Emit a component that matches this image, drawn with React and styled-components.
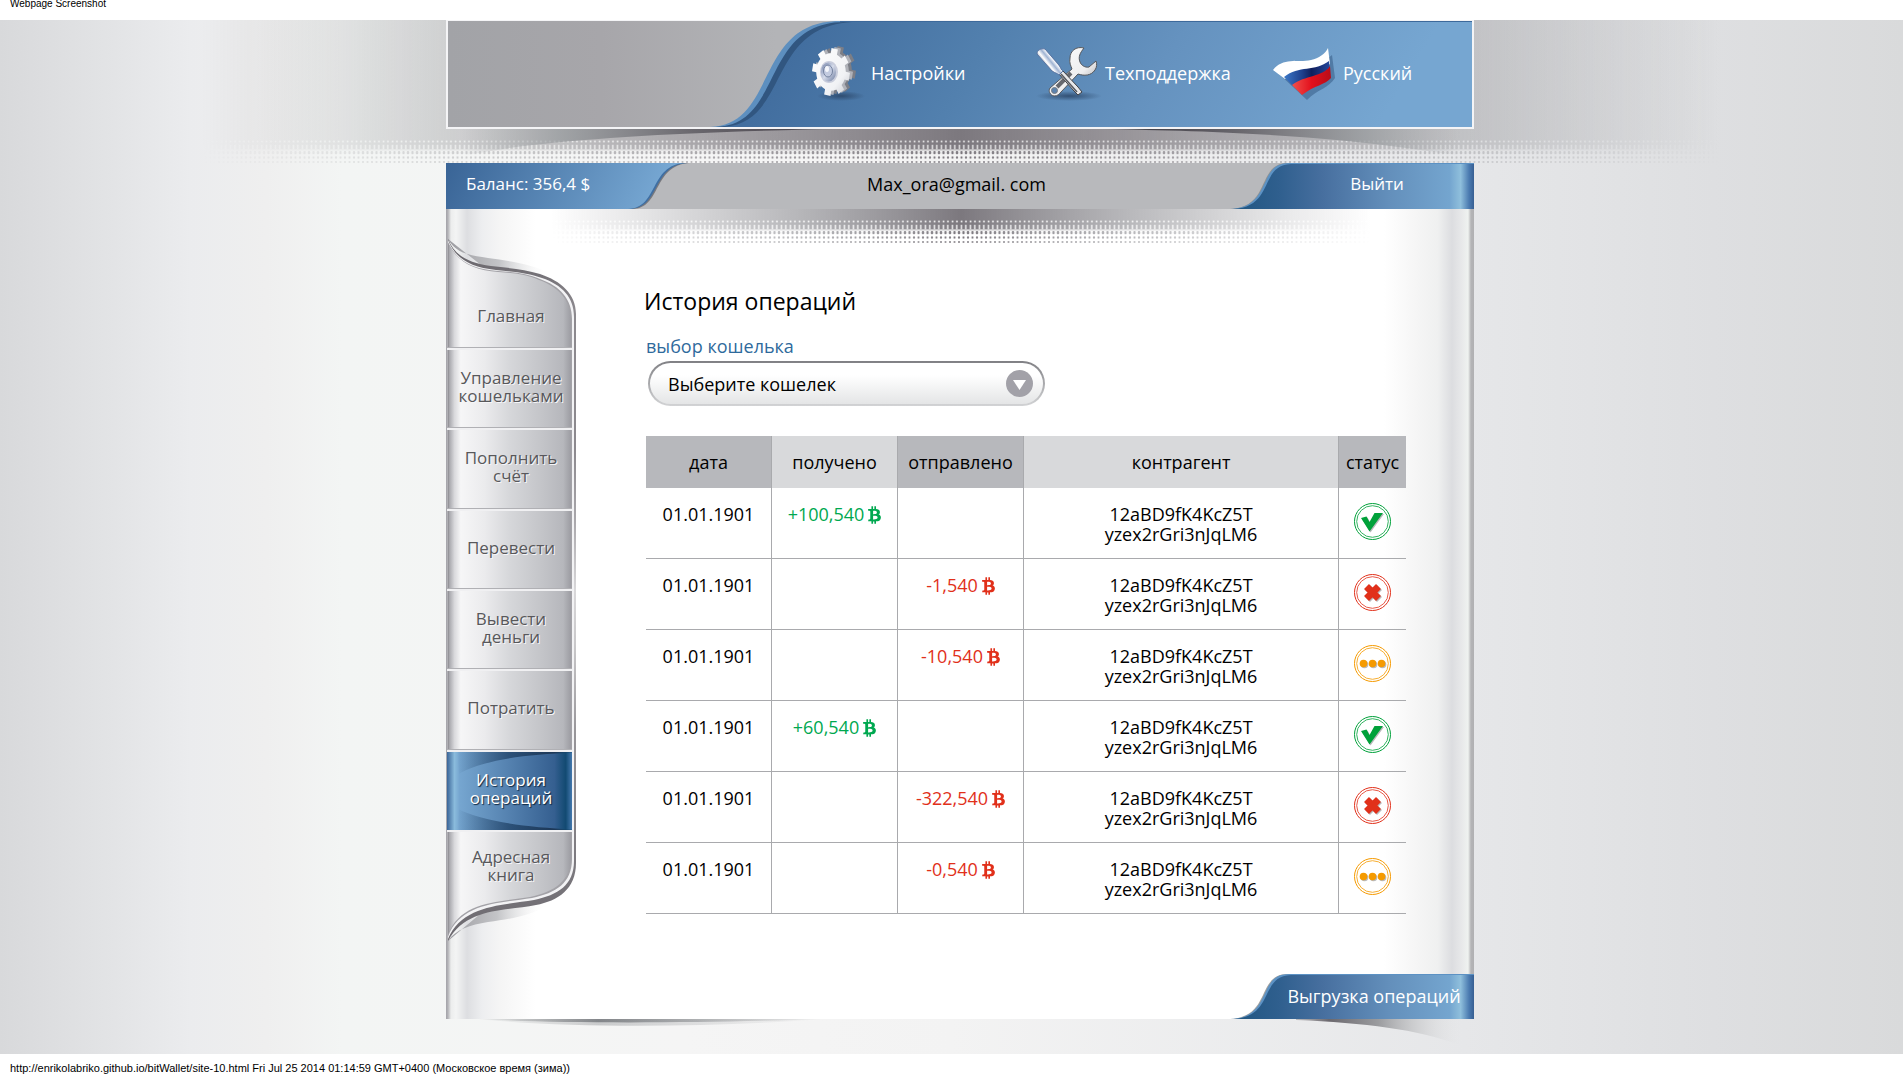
import React from "react";
import styled, { createGlobalStyle, css } from "styled-components";
import { FaBtc } from "react-icons/fa";

const GlobalStyle = createGlobalStyle`
  *, *::before, *::after { box-sizing: border-box; }
  body { margin: 0; background: #fff; color: #000; font-family: "Open Sans", "Noto Sans", sans-serif; font-size: 18px; line-height: 20px; }
  a { color: inherit; text-decoration: none; }
`;

const Caption = styled.p`
  margin: 0;
  height: 20px;
  padding: ${(p) => (p.$bottom ? "10px" : "0")} 10px 0;
  font-family: "Liberation Sans", Arial, sans-serif;
  font-size: ${(p) => (p.$bottom ? "11px" : "10px")};
  line-height: 8px;
  background: #fff;
`;

const Stage = styled.div`
  position: relative;
  overflow: hidden;
  padding: 0 0 35px 17px;
  background: linear-gradient(90deg, #d8d9db 0%, #e3e4e6 6%, #ebecee 10%, #efefef 14%, #f3f5f4 18%, #f5f5f5 36%, #f3f3f3 50%, #e6e7e9 77%, #dedfe1 90%, #d9dadb 100%);
`;

const StageShade = styled.svg`
  position: absolute;
  top: 0;
  left: calc(50% + 9px);
  width: 1520px;
  height: 143px;
  margin-left: -760px;
`;

const Column = styled.div`
  position: relative;
  width: 1028px;
  margin: 0 auto;
`;

const Header = styled.header`
  position: relative;
  height: 109px;
  margin-bottom: 34px;
  border: 2px solid #f4f4f6;
  border-top-width: 1px;
  background: linear-gradient(90deg, #a2a3a7, #a7a6aa 15%, #b3b4b7 32%);
`;

const HeaderArt = styled.svg`
  position: absolute;
  inset: 0;
  width: 100%;
  height: 100%;
`;

const HeaderShadow = styled.svg`
  position: absolute;
  left: 0;
  top: 109px;
  width: 1028px;
  height: 26px;
`;

const TopNav = styled.nav`
  position: relative;
  display: grid;
  grid-template-columns: 225px 238px 1fr;
  align-items: center;
  height: 100%;
  padding: 0 0 3px 362px;
`;

const TopLink = styled.a`
  display: flex;
  align-items: center;
  color: #fff;
  line-height: 24px;
`;

const TopIcon = styled.svg`
  flex: none;
  width: ${(p) => p.$w}px;
  height: 56px;
`;

const Bar = styled.div`
  display: grid;
  grid-template-columns: 244px 1fr 244px;
  align-items: stretch;
  height: 46px;
  background: #b8b9bc;
`;

const Balance = styled.div`
  position: relative;
  padding-left: 20px;
  color: #fff;
  font-size: 17px;
  font-weight: 500;
  line-height: 42px;
`;

const Account = styled.div`
  padding-right: 7px;
  text-align: center;
  line-height: 42px;
`;

const TabArt = styled.svg`
  position: absolute;
  left: 0;
  top: 0;
  width: 100%;
  height: 100%;
`;

const TabLink = styled.a`
  position: relative;
  display: block;
  width: 244px;
  height: 45px;
  padding: 0 10px 0 54px;
  color: #fff;
  font-weight: 500;
  line-height: 45px;
  text-align: center;
  white-space: nowrap;
  ${(p) => p.$export && css`align-self: flex-end; margin: 33px 0 0;`}
  ${(p) => p.$bar && css`height: 46px; padding-right: 4px; font-size: 17px; line-height: 42px;`}
`;

const Label = styled.span`
  position: relative;
`;

const Sheet = styled.div`
  position: relative;
  display: flex;
  flex-direction: column;
  background: linear-gradient(90deg, #a3a2a8 0, #b4b4b8 2px, #eceded 5px, #f3f4f4 10px, #dddee1 21px, #edeef0 36px, #f5f5f5 54px, #fff 90px, #fff calc(100% - 90px), #f5f5f5 calc(100% - 56px), #eff0f0 calc(100% - 36px), #dcdde0 calc(100% - 22px), #e8e9ea calc(100% - 12px), #eff2f0 calc(100% - 6px), #b4b4b6 calc(100% - 3px), #b0b0b2 100%);
`;

const SheetShade = styled.svg`
  position: absolute;
  left: 0;
  top: 0;
  width: 100%;
  height: 36px;
`;

const SheetShadow = styled.svg`
  position: absolute;
  left: 0;
  top: 100%;
  width: 1028px;
  height: 32px;
`;

const Columns = styled.div`
  position: relative;
  display: flex;
  align-items: flex-start;
`;

const SideNav = styled.nav`
  position: relative;
  flex: none;
  width: 131px;
  margin-top: 30px;
`;

const SideArt = styled.svg`
  position: absolute;
  left: 0;
  top: 0;
  width: 131px;
  height: 702px;
`;

const SideList = styled.ul`
  position: relative;
  display: grid;
  grid-template-rows: 109px repeat(6, 1fr) 111px;
  width: 125px;
  height: 702px;
  margin: 0 0 0 1px;
  padding: 0;
  list-style: none;
`;

const SideItem = styled.li`
  display: flex;
  &:first-child { padding-top: 48px; }
  &:last-child { padding-bottom: 38px; }
  & + & { border-top: 2px solid #f0f0f2; box-shadow: 0 -1px 0 #b0b0b4; }
`;

const SideLink = styled.a`
  position: relative;
  flex: 1;
  display: flex;
  align-items: center;
  justify-content: center;
  padding: 0 8px 4px 11px;
  font-size: 17px;
  line-height: 18px;
  text-align: center;
  color: #58585b;
  text-shadow: 1px 1px 0 #f6f6f8;
  ${(p) => p.$active && css`
    color: #fff;
    text-shadow: 1px 1px 1px #10273f;
  `}
`;

const Main = styled.main`
  flex: 1;
  padding: 76px 68px 0 69px;
`;

const Title = styled.h1`
  margin: 0 0 18px -2px;
  font-size: 23px;
  font-weight: 400;
  line-height: 32px;
`;

const FieldLabel = styled.label`
  display: block;
  color: #2f6a9c;
  line-height: 23px;
`;

const SelectWrap = styled.div`
  position: relative;
  width: 397px;
  margin: 3px 0 30px 2px;
`;

const Select = styled.select`
  display: block;
  appearance: none;
  width: 100%;
  height: 45px;
  padding: 0 60px 0 18px;
  border: 2px solid transparent;
  border-radius: 23px;
  background: linear-gradient(#fff 30%, #e4e5e6) padding-box, linear-gradient(#808084, #d2d3d5) border-box;
  color: #000;
  font: inherit;
  line-height: 24px;
`;

const SelectArrow = styled.svg`
  position: absolute;
  right: 12px;
  top: 9px;
  width: 27px;
  height: 27px;
  pointer-events: none;
`;

const Table = styled.table`
  width: 100%;
  table-layout: fixed;
  border-collapse: separate;
  border-spacing: 0;
`;

const Th = styled.th`
  width: ${(p) => p.$w};
  height: 52px;
  padding: 0;
  font-weight: 400;
  text-align: center;
  background: ${(p) => (p.$dark ? "#b7b8bc" : "#d8d9db")};
  & + & { border-left: 1px solid #a9aaad; }
`;

const Td = styled.td`
  height: 71px;
  padding: 16px 0 0;
  border-bottom: 1px solid #a9aaad;
  vertical-align: top;
  text-align: center;
  color: ${(p) => p.$color || "#000"};
  & + & { border-left: 1px solid #a9aaad; }
`;

const StatusTd = styled(Td)`
  padding: 15px 0 0;
`;

const StatusIcon = styled.svg`
  display: block;
  width: 37px;
  height: 37px;
  margin: 0 auto;
`;

const Coin = styled(FaBtc)`
  width: 13px;
  height: 18px;
  margin-left: 4px;
  vertical-align: -3px;
`;

/* Halftone fade: a solid band that breaks up into rows of shrinking dots. */
function HalftoneDefs({ id, solid }) {
  return (
    <>
      <pattern id={`${id}-dots`} width="4.5" height="36" y={solid} patternUnits="userSpaceOnUse">
        <rect width="4.5" height="20.5" fill="#fff" />
        <rect x="1.7" y="11.6" width="1.6" height="1.8" fill="#111" />
        <rect x="1.6" y="15.8" width="1.5" height="4.7" fill="#222" />
        <rect y="20.5" width="4.5" height="1" fill="#777" />
        <rect x="3.3" y="22" width="2.4" height="3.2" rx="1" fill="#fff" />
        <rect x="-1.2" y="22" width="2.4" height="3.2" rx="1" fill="#fff" />
        <rect x="3.5" y="27.2" width="2" height="2.6" rx="1" fill="#fff" />
        <rect x="-1" y="27.2" width="2" height="2.6" rx="1" fill="#fff" />
        <rect x="3.7" y="32" width="1.6" height="2" fill="#ddd" />
        <rect x="-0.8" y="32" width="1.6" height="2" fill="#ddd" />
      </pattern>
      <mask id={`${id}-mask`} maskUnits="userSpaceOnUse" x="0" y="0" width="1600" height={solid + 36}>
        <rect width="1600" height={solid} fill="#fff" />
        <rect y={solid} width="1600" height="36" fill={`url(#${id}-dots)`} />
      </mask>
    </>
  );
}

function TopShade() {
  return (
    <StageShade viewBox="0 0 1520 143" aria-hidden="true">
      <defs>
        <linearGradient id="top-shade">
          <stop offset="0" stopColor="#7c787e" stopOpacity="0" />
          <stop offset="0.08" stopColor="#858589" stopOpacity="0.14" />
          <stop offset="0.16" stopColor="#858589" stopOpacity="0.32" />
          <stop offset="0.35" stopColor="#7c787e" stopOpacity="0.68" />
          <stop offset="0.5" stopColor="#7c787e" stopOpacity="1" />
          <stop offset="0.65" stopColor="#7c787e" stopOpacity="0.66" />
          <stop offset="0.84" stopColor="#858589" stopOpacity="0.36" />
          <stop offset="1" stopColor="#858589" stopOpacity="0" />
        </linearGradient>
        <HalftoneDefs id="top" solid={109} />
      </defs>
      <rect width="1520" height="143" fill="url(#top-shade)" mask="url(#top-mask)" />
    </StageShade>
  );
}

function InnerShade() {
  return (
    <SheetShade viewBox="0 0 1028 36" preserveAspectRatio="none" aria-hidden="true">
      <defs>
        <linearGradient id="inner-shade" gradientUnits="userSpaceOnUse" x1="105" x2="925" y1="0" y2="0">
          <stop offset="0" stopColor="#7c787e" stopOpacity="0" />
          <stop offset="0.1" stopColor="#8b8b90" stopOpacity="0.2" />
          <stop offset="0.3" stopColor="#8b8b90" stopOpacity="0.62" />
          <stop offset="0.5" stopColor="#7c787e" stopOpacity="1" />
          <stop offset="0.7" stopColor="#8b8b90" stopOpacity="0.62" />
          <stop offset="0.9" stopColor="#8b8b90" stopOpacity="0.18" />
          <stop offset="1" stopColor="#7c787e" stopOpacity="0" />
        </linearGradient>
        <HalftoneDefs id="inner" solid={0} />
      </defs>
      <rect width="1028" height="36" fill="url(#inner-shade)" mask="url(#inner-mask)" />
    </SheetShade>
  );
}

function HeaderBackground() {
  return (
    <HeaderArt viewBox="0 0 1024 106" preserveAspectRatio="none" aria-hidden="true">
      <defs>
        <linearGradient id="head-blue" gradientUnits="userSpaceOnUse" x1="400" y1="-60" x2="860" y2="220">
          <stop offset="0" stopColor="#426e9f" />
          <stop offset="0.3" stopColor="#5280ae" />
          <stop offset="0.6" stopColor="#6592bf" />
          <stop offset="1" stopColor="#76a6d1" />
        </linearGradient>
      </defs>
      <path d="M262 106 C330 104 306 0 392 0 H1024 V106 Z" fill="#5d8fbf" />
      <path d="M268 106 C336 104 312 2 396 1 H1024 V106 Z" fill="#315680" />
      <path d="M276 106 C342 101 318 6 404 1 H1024 V106 Z" fill="url(#head-blue)" />
      <rect x="392" width="632" height="1" fill="#3d699b" />
    </HeaderArt>
  );
}

function HeaderCastShadow() {
  return (
    <HeaderShadow viewBox="0 0 1028 26" aria-hidden="true">
      <defs>
        <linearGradient id="cast-left" gradientUnits="userSpaceOnUse" x1="15" x2="400" y1="0" y2="0">
          <stop offset="0" stopColor="#a5a7aa" stopOpacity="0" />
          <stop offset="0.25" stopColor="#969a9d" stopOpacity="0.7" />
          <stop offset="0.6" stopColor="#6a686e" />
          <stop offset="0.85" stopColor="#504b53" />
          <stop offset="1" stopColor="#504b53" stopOpacity="0" />
        </linearGradient>
        <linearGradient id="cast-right" gradientUnits="userSpaceOnUse" x1="1013" x2="650" y1="0" y2="0">
          <stop offset="0" stopColor="#a5a7aa" stopOpacity="0" />
          <stop offset="0.25" stopColor="#969a9d" stopOpacity="0.7" />
          <stop offset="0.6" stopColor="#6a686e" />
          <stop offset="0.85" stopColor="#45424a" />
          <stop offset="1" stopColor="#45424a" stopOpacity="0" />
        </linearGradient>
      </defs>
      <path d="M10 0 H400 C260 2 150 8 70 18 L20 26 Z" fill="url(#cast-left)" />
      <path d="M1018 0 H650 C790 2 880 8 960 19 L1010 26 Z" fill="url(#cast-right)" />
    </HeaderShadow>
  );
}

function gearPath(cx, cy, rx, ry, turn) {
  const steps = [[-0.5, 0.78], [-0.27, 0.78], [-0.22, 1], [0.22, 1], [0.27, 0.78]];
  const points = [];
  for (let i = 0; i < 8; i += 1) {
    steps.forEach(([offset, radius]) => {
      const angle = ((i + offset) * Math.PI) / 4 + turn;
      points.push(`${(cx + Math.cos(angle) * rx * radius).toFixed(1)} ${(cy + Math.sin(angle) * ry * radius).toFixed(1)}`);
    });
  }
  return `M${points.join("L")}Z`;
}

function GearIcon() {
  return (
    <TopIcon $w={61} viewBox="0 0 61 56" aria-hidden="true">
      <defs>
        <linearGradient id="gear-face" x1="0" y1="0" x2="1" y2="1">
          <stop offset="0" stopColor="#ffffff" />
          <stop offset="0.7" stopColor="#f1f2f5" />
          <stop offset="1" stopColor="#c5c7ce" />
        </linearGradient>
        <linearGradient id="gear-hub" x1="0" y1="0" x2="1" y2="1">
          <stop offset="0" stopColor="#6f7fa8" />
          <stop offset="0.5" stopColor="#d5dbea" />
          <stop offset="1" stopColor="#6a799d" />
        </linearGradient>
        <radialGradient id="icon-ground">
          <stop offset="0" stopColor="#2b4668" stopOpacity="0.85" />
          <stop offset="1" stopColor="#2b4668" stopOpacity="0" />
        </radialGradient>
      </defs>
      <ellipse cx="31" cy="51" rx="24" ry="5" fill="url(#icon-ground)" />
      <path d={gearPath(27, 25, 19, 24, 0.2)} fill="#7c7e86" />
      <path d={gearPath(24, 26, 19, 24, 0.2)} fill="#b0b2b9" />
      <path d={gearPath(21, 27, 19, 24, 0.2)} fill="url(#gear-face)" />
      <ellipse cx="19" cy="27" rx="9" ry="11" fill="#c9cddc" />
      <ellipse cx="18.500" cy="27" rx="7.500" ry="9.500" fill="url(#gear-hub)" />
      <ellipse cx="18" cy="26" rx="4.500" ry="6" fill="#c3cbe0" stroke="#74829f" />
      <ellipse cx="17" cy="24" rx="2" ry="3" fill="#f4f6fb" />
    </TopIcon>
  );
}

function ToolsIcon() {
  return (
    <TopIcon $w={70} viewBox="0 0 70 56" aria-hidden="true">
      <defs>
        <linearGradient id="tool-handle" gradientUnits="userSpaceOnUse" x1="6" y1="18" x2="17" y2="9">
          <stop offset="0" stopColor="#6f7d96" />
          <stop offset="0.35" stopColor="#ffffff" />
          <stop offset="0.6" stopColor="#9fb3d2" />
          <stop offset="0.8" stopColor="#f4f6fb" />
          <stop offset="1" stopColor="#4c6894" />
        </linearGradient>
        <linearGradient id="tool-wrench" x1="0" y1="0" x2="1" y2="1">
          <stop offset="0" stopColor="#ffffff" />
          <stop offset="0.6" stopColor="#eeeeef" />
          <stop offset="1" stopColor="#8d8e92" />
        </linearGradient>
      </defs>
      <ellipse cx="34" cy="51" rx="33" ry="5" fill="url(#icon-ground)" />
      <path d="M49 3 C41 1 35 6 35 13 C34 18 36 21 37 24 L15 43 C13 46 15 50 19 51 C23 51 24 49 26 47 L43 29 C49 31 56 31 60 25 C62 22 62 19 61 16 L54 22 C50 23 46 20 45 17 C43 12 45 8 49 3 Z" fill="url(#tool-wrench)" stroke="#55575c" strokeWidth="1" />
      <path d="M36 28 L22 42" stroke="#66686e" strokeWidth="4" />
      <circle cx="19.500" cy="45.500" r="3" fill="#5b82ad" stroke="#777a80" />
      <path d="M24 29 L28 26 L43 42 L47 47 L43 50 L39 46 Z" fill="#e8e8ea" stroke="#3f4146" strokeWidth="1" />
      <path d="M26 29 L42 47" stroke="#55575d" strokeWidth="1.500" />
      <path d="M2 9 C2 5 6 3 10 4 L24 20 C26 23 26 25 28 26 L24 30 C22 28 20 28 17 26 Z" fill="url(#tool-handle)" stroke="#5975a3" strokeWidth="1" />
    </TopIcon>
  );
}

function FlagIcon() {
  return (
    <TopIcon $w={70} viewBox="0 0 70 56" aria-hidden="true">
      <defs>
        <linearGradient id="flag-blue">
          <stop offset="0" stopColor="#3c78c8" />
          <stop offset="0.4" stopColor="#1d3f8c" />
          <stop offset="0.6" stopColor="#101f5c" />
          <stop offset="1" stopColor="#23479c" />
        </linearGradient>
        <linearGradient id="flag-red">
          <stop offset="0" stopColor="#f0504c" />
          <stop offset="0.5" stopColor="#e3101c" />
          <stop offset="1" stopColor="#b80c18" />
        </linearGradient>
      </defs>
      <path d="M5 28 C20 20 42 24 59 10 L62 33 C56 43 45 44 34 55 Z" fill="#2b4d78" opacity="0.45" />
      <path d="M0 25 C10 12 24 18 38 15 C46 13 52 9 55 3 L57 19 C48 28 30 24 12 34 Z" fill="#fff" />
      <path d="M11 32 C26 20 42 27 56 16 L57 26 C48 34 33 32 20 41 Z" fill="url(#flag-blue)" />
      <path d="M19 40 C32 30 50 32 57 21 L58 33 C52 40 42 40 29 50 Z" fill="url(#flag-red)" />
    </TopIcon>
  );
}

function BalanceBackground() {
  return (
    <TabArt viewBox="0 0 244 46" preserveAspectRatio="none" aria-hidden="true">
      <defs>
        <linearGradient id="balance-blue" gradientUnits="userSpaceOnUse" x1="0" y1="0" x2="190" y2="90">
          <stop offset="0" stopColor="#396496" />
          <stop offset="1" stopColor="#78a9d4" />
        </linearGradient>
      </defs>
      <path d="M0 0 H244 C206 2 216 46 186 46 H0 Z" fill="#77787d" />
      <path d="M0 0 H242 C205 2 215 45 184 46 H0 Z" fill="#3f6fa3" />
      <path d="M0 0 H239 C203 2 213 45 182 46 H0 Z" fill="url(#balance-blue)" />
    </TabArt>
  );
}

function TabBackground({ id }) {
  return (
    <TabArt viewBox="0 0 244 46" preserveAspectRatio="none" aria-hidden="true">
      <defs>
        <linearGradient id={id} gradientUnits="userSpaceOnUse" x1="0" y1="0" x2="244" y2="0">
          <stop offset="0" stopColor="#1f5580" />
          <stop offset="0.2" stopColor="#2f5f8e" />
          <stop offset="0.38" stopColor="#476f9f" />
          <stop offset="0.65" stopColor="#638fbb" />
          <stop offset="0.9" stopColor="#74a5cf" />
          <stop offset="0.945" stopColor="#8fbfdc" />
          <stop offset="0.98" stopColor="#4a7ab0" />
          <stop offset="1" stopColor="#375f92" />
        </linearGradient>
      </defs>
      <path d="M0 46 C42 44 26 0 58 0 H70 V46 Z" fill="#8a8886" opacity="0.8" />
      <path d="M1 46 C43 44 27 0 59 0 H244 V46 Z" fill="#5c92c4" />
      <path d="M3 46 C45 44 29 2 61 1 H244 V46 Z" fill={`url(#${id})`} />
    </TabArt>
  );
}

function SideBackground() {
  return (
    <SideArt viewBox="0 0 131 702" aria-hidden="true">
      <defs>
        <linearGradient id="side-face" gradientUnits="userSpaceOnUse" x1="1" x2="126" y1="0" y2="0">
          <stop offset="0" stopColor="#77757b" />
          <stop offset="0.02" stopColor="#a9a9ae" />
          <stop offset="0.06" stopColor="#d9d9dc" />
          <stop offset="0.11" stopColor="#f6f6f7" />
          <stop offset="0.3" stopColor="#ebebed" />
          <stop offset="0.5" stopColor="#d6d7da" />
          <stop offset="0.75" stopColor="#c4c5c9" />
          <stop offset="0.93" stopColor="#b6b7bc" />
          <stop offset="1" stopColor="#99999f" />
        </linearGradient>
        <linearGradient id="side-frame" x1="0" y1="0" x2="0" y2="1">
          <stop offset="0" stopColor="#5d5a60" />
          <stop offset="0.1" stopColor="#8c898e" />
          <stop offset="0.3" stopColor="#8c898e" />
          <stop offset="0.4" stopColor="#a9a7ab" />
          <stop offset="0.5" stopColor="#d9d8da" />
          <stop offset="0.58" stopColor="#c9c8ca" />
          <stop offset="0.7" stopColor="#98969a" />
          <stop offset="1" stopColor="#6b686e" />
        </linearGradient>
        <linearGradient id="side-leaf">
          <stop offset="0" stopColor="#9c9ca1" />
          <stop offset="0.5" stopColor="#c3c4c7" />
          <stop offset="1" stopColor="#fff" stopOpacity="0" />
        </linearGradient>
      </defs>
      <path d="M2 0 C10 14 22 16 42 19 C66 22 88 26 104 34 L94 40 L40 30 Z" fill="url(#side-leaf)" />
      <path d="M2 702 C10 690 24 686 42 683 C66 680 84 676 100 668 L90 662 L40 670 Z" fill="url(#side-leaf)" />
      <path d="M2 0 C8 16 22 24 45 27 C62 29 78 30 94 35 C115 42 130 55 130 75 V624 C130 650 112 662 90 666 C60 672 20 668 2 702 Z" fill="url(#side-frame)" />
      <path d="M2 1 C10 20 24 28 50 31 C70 33 82 34 96 39 C116 46 128 58 128 78 V622 C128 646 112 656 88 661 C60 666 16 665 2 700 Z" fill="#f3f3f5" />
      <path d="M2 3 C12 24 28 30 52 32 C70 33 82 35 94 40 C114 47 126 60 126 80 V620 C126 644 110 654 86 659 C56 664 14 663 2 698 Z" fill="#a3a2a7" />
      <path d="M2 4 C12 24 28 31 52 33 C70 34 82 36 93 41 C112 48 125 60 125 82 V618 C125 642 108 653 84 658 C54 663 14 662 2 696 Z" fill="url(#side-face)" />
    </SideArt>
  );
}

function ActiveBackground() {
  return (
    <TabArt viewBox="0 0 125 79" preserveAspectRatio="none" aria-hidden="true">
      <defs>
        <linearGradient id="active-face">
          <stop offset="0" stopColor="#3a6598" />
          <stop offset="0.06" stopColor="#8abbdc" />
          <stop offset="0.1" stopColor="#76a6d0" />
          <stop offset="0.5" stopColor="#5481af" />
          <stop offset="0.86" stopColor="#355f90" />
          <stop offset="0.95" stopColor="#124a72" />
          <stop offset="1" stopColor="#4478ae" />
        </linearGradient>
        <linearGradient id="active-shade">
          <stop offset="0" stopColor="#1f4166" stopOpacity="0" />
          <stop offset="0.45" stopColor="#1f4166" stopOpacity="0.75" />
          <stop offset="0.85" stopColor="#1a3350" stopOpacity="0.9" />
          <stop offset="1" stopColor="#124a72" stopOpacity="0.4" />
        </linearGradient>
      </defs>
      <rect width="125" height="79" fill="url(#active-face)" />
      <path d="M10 0 H125 V1 C80 2 36 8 12 22 Z" fill="url(#active-shade)" />
      <path d="M10 79 H125 V78 C80 76 36 70 12 58 Z" fill="url(#active-shade)" />
    </TabArt>
  );
}

const STATUS = {
  done: { color: "#00a13a", label: "выполнено" },
  failed: { color: "#e1301a", label: "отклонено" },
  pending: { color: "#f59a00", label: "в обработке" },
};

function StatusMark({ kind, fill }) {
  if (kind === "done") {
    return <path d="M7 15 L12.500 13.500 L15.500 19 L20.500 10 H29 L15.500 28.500 Z" fill={fill} />;
  }
  if (kind === "failed") {
    return <path d="M12.500 12.500 L24.500 24.500 M24.500 12.500 L12.500 24.500" stroke={fill} strokeWidth="7" />;
  }
  return (
    <g fill={fill}>
      <circle cx="9.500" cy="18.500" r="3.800" />
      <circle cx="18.500" cy="18.500" r="3.800" />
      <circle cx="27.500" cy="18.500" r="3.800" />
    </g>
  );
}

function Status({ kind }) {
  const { color, label } = STATUS[kind];
  return (
    <StatusIcon viewBox="0 0 37 37" role="img" aria-label={label}>
      <circle cx="18.500" cy="18.500" r="18" fill="#fff" stroke={color} />
      <circle cx="18.500" cy="18.500" r="15.800" fill="none" stroke={color} strokeWidth="0.800" />
      <g transform="translate(1 1)">
        <StatusMark kind={kind} fill="#b9b9bb" />
      </g>
      <StatusMark kind={kind} fill={color} />
    </StatusIcon>
  );
}

const MENU = [
  ["Главная"],
  ["Управление", "кошельками"],
  ["Пополнить", "счёт"],
  ["Перевести"],
  ["Вывести", "деньги"],
  ["Потратить"],
  ["История", "операций"],
  ["Адресная", "книга"],
];

const OPERATIONS = [
  { received: "+100,540", status: "done" },
  { sent: "-1,540", status: "failed" },
  { sent: "-10,540", status: "pending" },
  { received: "+60,540", status: "done" },
  { sent: "-322,540", status: "failed" },
  { sent: "-0,540", status: "pending" },
];

function Amount({ value }) {
  return value ? (
    <>
      {value}
      <Coin aria-label="BTC" />
    </>
  ) : null;
}

export default function App() {
  return (
    <>
      <GlobalStyle />
      <Caption>Webpage Screenshot</Caption>
      <Stage>
        <TopShade />
        <Column>
          <HeaderCastShadow />
          <Header>
            <HeaderBackground />
            <TopNav>
              <TopLink href="#settings"><GearIcon />Настройки</TopLink>
              <TopLink href="#support"><ToolsIcon />Техподдержка</TopLink>
              <TopLink href="#language"><FlagIcon />Русский</TopLink>
            </TopNav>
          </Header>
          <Bar>
            <Balance><BalanceBackground /><Label>Баланс: 356,4 $</Label></Balance>
            <Account>Max_ora@gmail. com</Account>
            <TabLink $bar href="#exit"><TabBackground id="exit-blue" /><Label>Выйти</Label></TabLink>
          </Bar>
          <Sheet>
            <InnerShade />
            <Columns>
              <SideNav>
                <SideBackground />
                <SideList>
                  {MENU.map((lines, index) => (
                    <SideItem key={lines[0]}>
                      <SideLink href={`#menu-${index}`} $active={index === 6}>
                        {index === 6 && <ActiveBackground />}
                        <Label>
                          {lines[0]}
                          {lines[1] && <><br />{lines[1]}</>}
                        </Label>
                      </SideLink>
                    </SideItem>
                  ))}
                </SideList>
              </SideNav>
              <Main>
                <Title>История операций</Title>
                <FieldLabel htmlFor="wallet">выбор кошелька</FieldLabel>
                <SelectWrap>
                  <Select id="wallet" defaultValue="">
                    <option value="">Выберите кошелек</option>
                  </Select>
                  <SelectArrow viewBox="0 0 27 27" aria-hidden="true">
                    <circle cx="13.500" cy="13.500" r="13.500" fill="#a2a1a8" />
                    <path d="M7 10 H20 L13.500 20 Z" fill="#fff" />
                  </SelectArrow>
                </SelectWrap>
                <Table>
                  <thead>
                    <tr>
                      <Th $w="125px" $dark>дата</Th>
                      <Th $w="126px">получено</Th>
                      <Th $w="126px" $dark>отправлено</Th>
                      <Th $w="auto">контрагент</Th>
                      <Th $w="68px" $dark>статус</Th>
                    </tr>
                  </thead>
                  <tbody>
                    {OPERATIONS.map((row, index) => (
                      <tr key={index}>
                        <Td>01.01.1901</Td>
                        <Td $color="#00a850"><Amount value={row.received} /></Td>
                        <Td $color="#e1301a"><Amount value={row.sent} /></Td>
                        <Td>12aBD9fK4KcZ5T<br />yzex2rGri3nJqLM6</Td>
                        <StatusTd><Status kind={row.status} /></StatusTd>
                      </tr>
                    ))}
                  </tbody>
                </Table>
              </Main>
            </Columns>
            <TabLink $export href="#export"><TabBackground id="export-blue" /><Label>Выгрузка операций</Label></TabLink>
            <SheetShadow viewBox="0 0 1028 32" aria-hidden="true">
              <defs>
                <linearGradient id="foot-left" gradientUnits="userSpaceOnUse" x1="30" x2="380" y1="0" y2="0">
                  <stop offset="0" stopColor="#86898c" stopOpacity="0" />
                  <stop offset="0.35" stopColor="#7c7f83" stopOpacity="0.9" />
                  <stop offset="1" stopColor="#86898c" stopOpacity="0" />
                </linearGradient>
                <linearGradient id="foot-right" gradientUnits="userSpaceOnUse" x1="850" x2="1015" y1="0" y2="0">
                  <stop offset="0" stopColor="#77747a" stopOpacity="0.4" />
                  <stop offset="0.2" stopColor="#6b686e" />
                  <stop offset="0.5" stopColor="#9b9c9f" />
                  <stop offset="1" stopColor="#e0e1e2" stopOpacity="0" />
                </linearGradient>
              </defs>
              <path d="M30 0 H380 C270 4 110 5 30 0 Z" fill="url(#foot-left)" />
              <path d="M30 0 H380 C270 8 130 10 30 0 Z" fill="url(#foot-left)" opacity="0.4" />
              <path d="M850 0 H1020 L1014 26 C970 10 920 4 850 1 Z" fill="url(#foot-right)" />
            </SheetShadow>
          </Sheet>
        </Column>
      </Stage>
      <Caption $bottom>
        http://enrikolabriko.github.io/bitWallet/site-10.html Fri Jul 25 2014 01:14:59 GMT+0400 (Московское время (зима))
      </Caption>
    </>
  );
}
